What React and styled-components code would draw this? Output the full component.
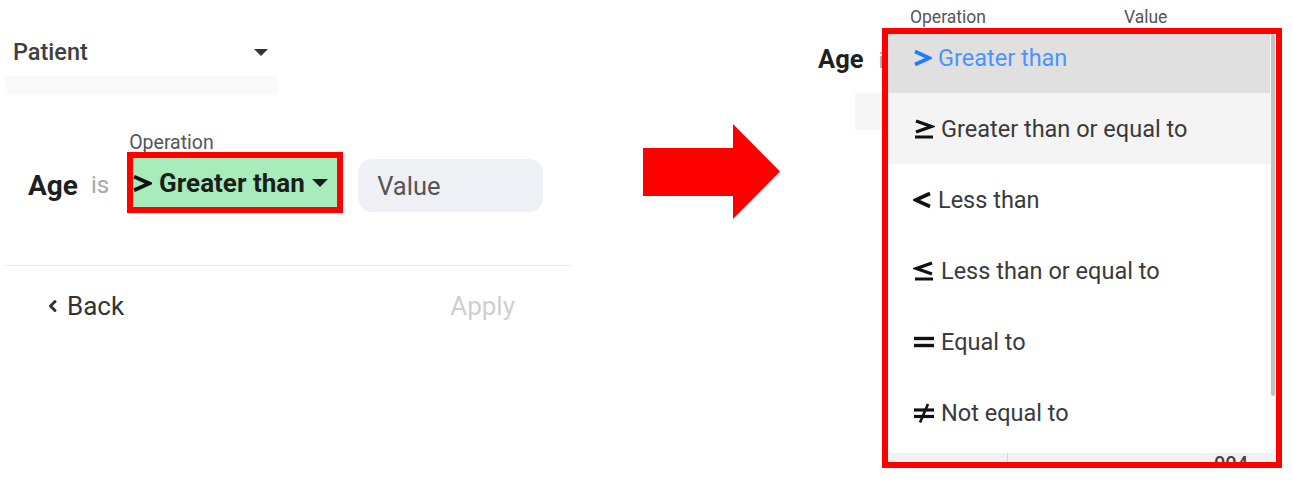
import React from 'react'
import styled, { createGlobalStyle } from 'styled-components'

const GlobalStyle = createGlobalStyle`
  *, *::before, *::after { box-sizing: border-box; }
  html, body { margin: 0; padding: 0; background: #fff; }
  body { font-family: Roboto, 'Liberation Sans', Arial, sans-serif; }
`

const operations = [
  { type: 'gt', label: 'Greater than', state: 'selected' },
  { type: 'gte', label: 'Greater than or equal to', state: 'hover' },
  { type: 'lt', label: 'Less than' },
  { type: 'lte', label: 'Less than or equal to' },
  { type: 'eq', label: 'Equal to' },
  { type: 'neq', label: 'Not equal to' },
]

const optionBg = { selected: '#e0e0e0', hover: '#f4f4f4' }

// operator glyphs drawn as small stroke icons
const OperatorIcon = ({ type, color = '#111', scale = 1 }) => {
  const common = { fill: 'none', stroke: color, strokeLinejoin: 'miter', strokeLinecap: 'butt' }
  let w = 22
  let h = 20
  let body = null
  if (type === 'gt' || type === 'lt') {
    w = 19
    h = 18
    const pts = type === 'gt' ? '2,2.5 16.5,9 2,15.5' : '17,2.5 2.5,9 17,15.5'
    body = <polyline points={pts} strokeWidth="3.6" {...common} />
  } else if (type === 'gte' || type === 'lte') {
    const pts = type === 'gte' ? '3,2 18.5,7.5 3,13' : '19,2 3.5,7.5 19,13'
    body = (
      <>
        <polyline points={pts} strokeWidth="3.2" {...common} />
        <line x1="2" y1="18" x2="20" y2="18" strokeWidth="3" {...common} />
      </>
    )
  } else if (type === 'eq') {
    body = (
      <>
        <line x1="1" y1="6.5" x2="21" y2="6.5" strokeWidth="3.4" {...common} />
        <line x1="1" y1="13.5" x2="21" y2="13.5" strokeWidth="3.4" {...common} />
      </>
    )
  } else {
    body = (
      <>
        <line x1="1" y1="7" x2="21" y2="7" strokeWidth="3.2" {...common} />
        <line x1="1" y1="13.5" x2="21" y2="13.5" strokeWidth="3.2" {...common} />
        <line x1="15" y1="1" x2="7" y2="19.5" strokeWidth="2.6" {...common} />
      </>
    )
  }
  return (
    <svg width={w * scale} height={h * scale} viewBox={`0 0 ${w} ${h}`} style={{ display: 'block' }}>
      {body}
    </svg>
  )
}

const ChevronLeft = () => (
  <svg width="11" height="16" viewBox="0 0 11 16">
    <polyline points="8,3.5 3.5,8 8,12.5" fill="none" stroke="#333" strokeWidth="3" strokeLinecap="round" strokeLinejoin="round" />
  </svg>
)

const App = () => {
  return (
    <>
      <GlobalStyle />
      <Page>
        <LeftPanel>
          <Header>
            <HeaderRow>
              <HeaderTitle>Patient</HeaderTitle>
              <Caret size={7} />
            </HeaderRow>
            <HeaderStrip />
          </Header>

          <FilterGrid>
            <OpLabel>Operation</OpLabel>
            <FieldName>Age</FieldName>
            <Connector>is</Connector>
            <Select>
              <SelectSymbol><OperatorIcon type="gt" scale={1.05} /></SelectSymbol>
              <SelectText>Greater than</SelectText>
              <Caret size={8} color="#1d1d1d" style={{ marginLeft: 7 }} />
            </Select>
            <ValueInput>Value</ValueInput>
          </FilterGrid>

          <Divider />

          <Footer>
            <BackButton><ChevronLeft />Back</BackButton>
            <ApplyButton>Apply</ApplyButton>
          </Footer>
        </LeftPanel>

        <ArrowWrap>
          <svg width="137" height="95" viewBox="0 0 137 95">
            <polygon points="0,24 90,24 90,0 137,47.5 90,95 90,72 0,72" fill="#ff0000" />
          </svg>
        </ArrowWrap>

        <RightPanel>
          <TopLabels>
            <span>Operation</span>
            <ValueLabel>Value</ValueLabel>
          </TopLabels>
          <AgeRow>
            <RightAge>Age</RightAge>
            <RightIs>is</RightIs>
          </AgeRow>
          <UnderBox />

          <Annotation>
            <Menu>
              <OptionList>
                {operations.map(op => {
                  const selected = op.state === 'selected'
                  return (
                    <Option key={op.label} state={op.state}>
                      <OptionSymbol>
                        <OperatorIcon type={op.type} color={selected ? '#1f7bff' : '#111'} />
                      </OptionSymbol>
                      <OptionText selected={selected}>{op.label}</OptionText>
                    </Option>
                  )
                })}
              </OptionList>
              <ScrollTrack>
                <ScrollThumb />
              </ScrollTrack>
            </Menu>
            <Peek>
              <PeekCell width={120} />
              <PeekCell>
                <PeekText>004</PeekText>
              </PeekCell>
            </Peek>
          </Annotation>
        </RightPanel>
      </Page>
    </>
  )
}

export default App

const Page = styled.div`
  display: flex;
  align-items: flex-start;
  width: 1293px;
  height: 482px;
  overflow: hidden;
  background: #fff;
`
const LeftPanel = styled.div`
  width: 580px;
  flex-shrink: 0;
`
const Header = styled.div`
  margin-left: 5px;
  width: 273px;
`
const HeaderRow = styled.div`
  display: flex;
  align-items: center;
  justify-content: space-between;
  height: 76px;
  padding: 28px 10px 0 8px;
`
const HeaderTitle = styled.span`
  font-size: 23.5px;
  font-weight: 500;
  color: #3f3f3f;
`
const Caret = styled.span`
  display: inline-block;
  width: 0;
  height: 0;
  border-left: ${p => p.size}px solid transparent;
  border-right: ${p => p.size}px solid transparent;
  border-top: ${p => p.size}px solid ${p => p.color || '#333'};
`
const HeaderStrip = styled.div`
  height: 19px;
  background: #fafafa;
`
const FilterGrid = styled.div`
  display: grid;
  grid-template-columns: auto auto auto auto;
  grid-template-rows: 18px 61px;
  align-items: center;
  justify-content: start;
  margin-top: 39px;
  padding-left: 28px;
`
const OpLabel = styled.span`
  grid-column: 3;
  grid-row: 1;
  font-size: 19.5px;
  line-height: 18px;
  color: #555;
  padding-left: 2px;
`
const FieldName = styled.span`
  grid-column: 1;
  grid-row: 2;
  font-size: 28px;
  font-weight: 700;
  color: #1f1f1f;
  padding-top: 6px;
`
const Connector = styled.span`
  grid-column: 2;
  grid-row: 2;
  margin: 0 18px 0 13px;
  padding-top: 4px;
  font-size: 24px;
  color: #a8a8a8;
`
const Select = styled.div`
  grid-column: 3;
  grid-row: 2;
  display: flex;
  align-items: center;
  width: 216px;
  height: 61px;
  border: 6px solid #ff0000;
  background: #a9ecbb;
`
const SelectSymbol = styled.span`
  margin: 1px 7px 0 -1px;
`
const SelectText = styled.span`
  font-size: 26px;
  font-weight: 700;
  color: #1d1d1d;
  white-space: nowrap;
`
const ValueInput = styled.div`
  grid-column: 4;
  grid-row: 2;
  display: flex;
  align-items: center;
  width: 185px;
  height: 53px;
  margin: 6px 0 0 15px;
  padding-left: 19px;
  border-radius: 14px;
  background: #eff0f5;
  font-size: 25.5px;
  color: #555;
`
const Divider = styled.div`
  width: 567px;
  height: 1px;
  margin: 52px 0 0 5px;
  background: #ececec;
`
const Footer = styled.div`
  display: flex;
  align-items: center;
  justify-content: space-between;
  width: 468px;
  height: 30px;
  margin: 25px 0 0 47px;
`
const BackButton = styled.span`
  display: flex;
  align-items: center;
  gap: 9px;
  font-size: 26px;
  color: #333;
`
const ApplyButton = styled.span`
  font-size: 26px;
  color: #cfcfcf;
`
const ArrowWrap = styled.div`
  flex-shrink: 0;
  margin: 124px 0 0 63px;
  line-height: 0;
`
const RightPanel = styled.div`
  position: relative;
  flex-shrink: 0;
  width: 493px;
  height: 482px;
  margin-left: 20px;
`
const TopLabels = styled.div`
  display: flex;
  height: 26px;
  padding: 8px 0 0 110px;
  font-size: 17.5px;
  line-height: 18px;
  color: #555;
`
const ValueLabel = styled.span`
  margin-left: 138px;
`
const AgeRow = styled.div`
  display: flex;
  align-items: baseline;
  height: 30px;
  margin-top: 18px;
  padding-left: 18px;
`
const RightAge = styled.span`
  font-size: 25.5px;
  font-weight: 700;
  color: #1f1f1f;
`
const RightIs = styled.span`
  margin-left: 15px;
  font-size: 22px;
  color: #a8a8a8;
`
const UnderBox = styled.div`
  width: 420px;
  height: 37px;
  margin: 19px 0 0 55px;
  background: #f6f6f6;
`
const Annotation = styled.div`
  position: absolute;
  left: 82px;
  top: 28px;
  width: 400px;
  height: 440px;
  display: flex;
  flex-direction: column;
  border: 6px solid #ff0000;
  background: #fff;
`
const Menu = styled.div`
  flex: 1;
  min-height: 0;
  display: flex;
  overflow: hidden;
`
const OptionList = styled.div`
  flex: 1;
  margin-top: -12px;
`
const Option = styled.div`
  display: flex;
  align-items: center;
  height: 71px;
  padding-left: 25px;
  background: ${p => optionBg[p.state] || '#fff'};
  font-size: 23.5px;
  color: #3a3a3a;
`
const OptionSymbol = styled.span`
  margin: 0 6px 0 0;
`
const OptionText = styled.span`
  color: ${p => (p.selected ? '#4b93ff' : '#3a3a3a')};
`
const ScrollTrack = styled.div`
  width: 6px;
  flex-shrink: 0;
  background: #fafafa;
`
const ScrollThumb = styled.div`
  width: 4px;
  height: 362px;
  margin-left: 1px;
  border-radius: 2px;
  background: #c2c2c2;
`
const Peek = styled.div`
  display: flex;
  height: 9px;
  overflow: hidden;
  background: #f1f1f1;
`
const PeekCell = styled.div`
  display: flex;
  justify-content: flex-end;
  ${p => (p.width ? `width: ${p.width}px; border-right: 1px solid #d6d6d6;` : 'flex: 1;')}
  padding-right: 28px;
`
const PeekText = styled.span`
  margin-top: 1px;
  font-size: 20px;
  line-height: 20px;
  font-weight: 500;
  color: #444;
`
